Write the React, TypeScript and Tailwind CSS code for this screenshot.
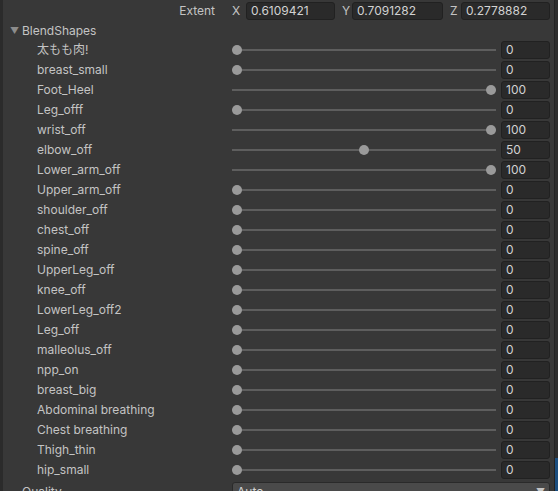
import React from "react";

const shapes: [string, number][] = [
  ["太もも肉!", 0],
  ["breast_small", 0],
  ["Foot_Heel", 100],
  ["Leg_offf", 0],
  ["wrist_off", 100],
  ["elbow_off", 50],
  ["Lower_arm_off", 100],
  ["Upper_arm_off", 0],
  ["shoulder_off", 0],
  ["chest_off", 0],
  ["spine_off", 0],
  ["UpperLeg_off", 0],
  ["knee_off", 0],
  ["LowerLeg_off2", 0],
  ["Leg_off", 0],
  ["malleolus_off", 0],
  ["npp_on", 0],
  ["breast_big", 0],
  ["Abdominal breathing", 0],
  ["Chest breathing", 0],
  ["Thigh_thin", 0],
  ["hip_small", 0],
];

function Field({ value, className }: { value: string; className: string }) {
  return (
    <div
      className={`h-[18px] flex items-center pl-[4px] bg-[#2a2a2a] border border-[#212121] rounded-[3px] text-[#d2d2d2] ${className}`}
    >
      {value}
    </div>
  );
}

function SliderRow({ name, value }: { name: string; value: number }) {
  return (
    <div className="h-[20px] shrink-0 flex items-center">
      <div className="w-[229px] pl-[34px] truncate">{name}</div>
      <div className="relative w-[264px] h-[20px] flex items-center">
        <div className="w-full h-[2px] bg-[#5e5e5e]" />
        <div
          className="absolute top-[5px] w-[10px] h-[10px] rounded-full bg-[#9a9a9a]"
          style={{ left: (value / 100) * 254 }}
        />
      </div>
      <Field value={String(value)} className="ml-[5px] w-[49px]" />
    </div>
  );
}

export default function App() {
  return (
    <div
      className="w-[558px] h-[491px] overflow-hidden flex bg-[#383838] text-[12px] text-[#c4c4c4]"
      style={{ fontFamily: "Inter, 'Noto Sans CJK JP', sans-serif" }}
    >
      <div className="w-[3px] shrink-0 bg-[#2b2b2b]" />
      <div className="w-[551px] shrink-0 flex flex-col">
        <div className="h-[21px] shrink-0 flex items-center">
          <div className="w-[212px] text-right">Extent</div>
          <div className="w-[17px]" />
          <span className="w-[14px]">X</span>
          <Field value="0.6109421" className="w-[89px]" />
          <span className="w-[10px] ml-[7px]">Y</span>
          <Field value="0.7091282" className="w-[91px]" />
          <span className="w-[11px] ml-[7px]">Z</span>
          <Field value="0.2778882" className="w-[89px]" />
        </div>
        <div className="h-[19px] shrink-0 flex items-center">
          <span className="ml-[7px] w-[12px] text-[9px] text-[#8c8c8c]">▼</span>
          <span>BlendShapes</span>
        </div>
        {shapes.map(([name, value]) => (
          <SliderRow key={name} name={name} value={value} />
        ))}
        <div className="h-[20px] shrink-0 flex items-start">
          <div className="w-[229px] pl-[19px] pt-[3px]">Quality</div>
          <div className="mt-[2px] w-[318px] h-[20px] flex items-center justify-between px-[4px] bg-[#4a4a4a] border border-[#2a2a2a] rounded-[3px] text-[#d2d2d2]">
            <span>Auto</span>
            <span className="text-[9px] text-[#c4c4c4]">▼</span>
          </div>
        </div>
      </div>
      <div className="w-[1px] shrink-0 bg-[#232323]" />
      <div className="w-[3px] shrink-0 flex flex-col bg-[#2d2d2d]">
        <div className="h-[458px]" />
        <div className="flex-1 bg-[#1c4f80]" />
      </div>
    </div>
  );
}
